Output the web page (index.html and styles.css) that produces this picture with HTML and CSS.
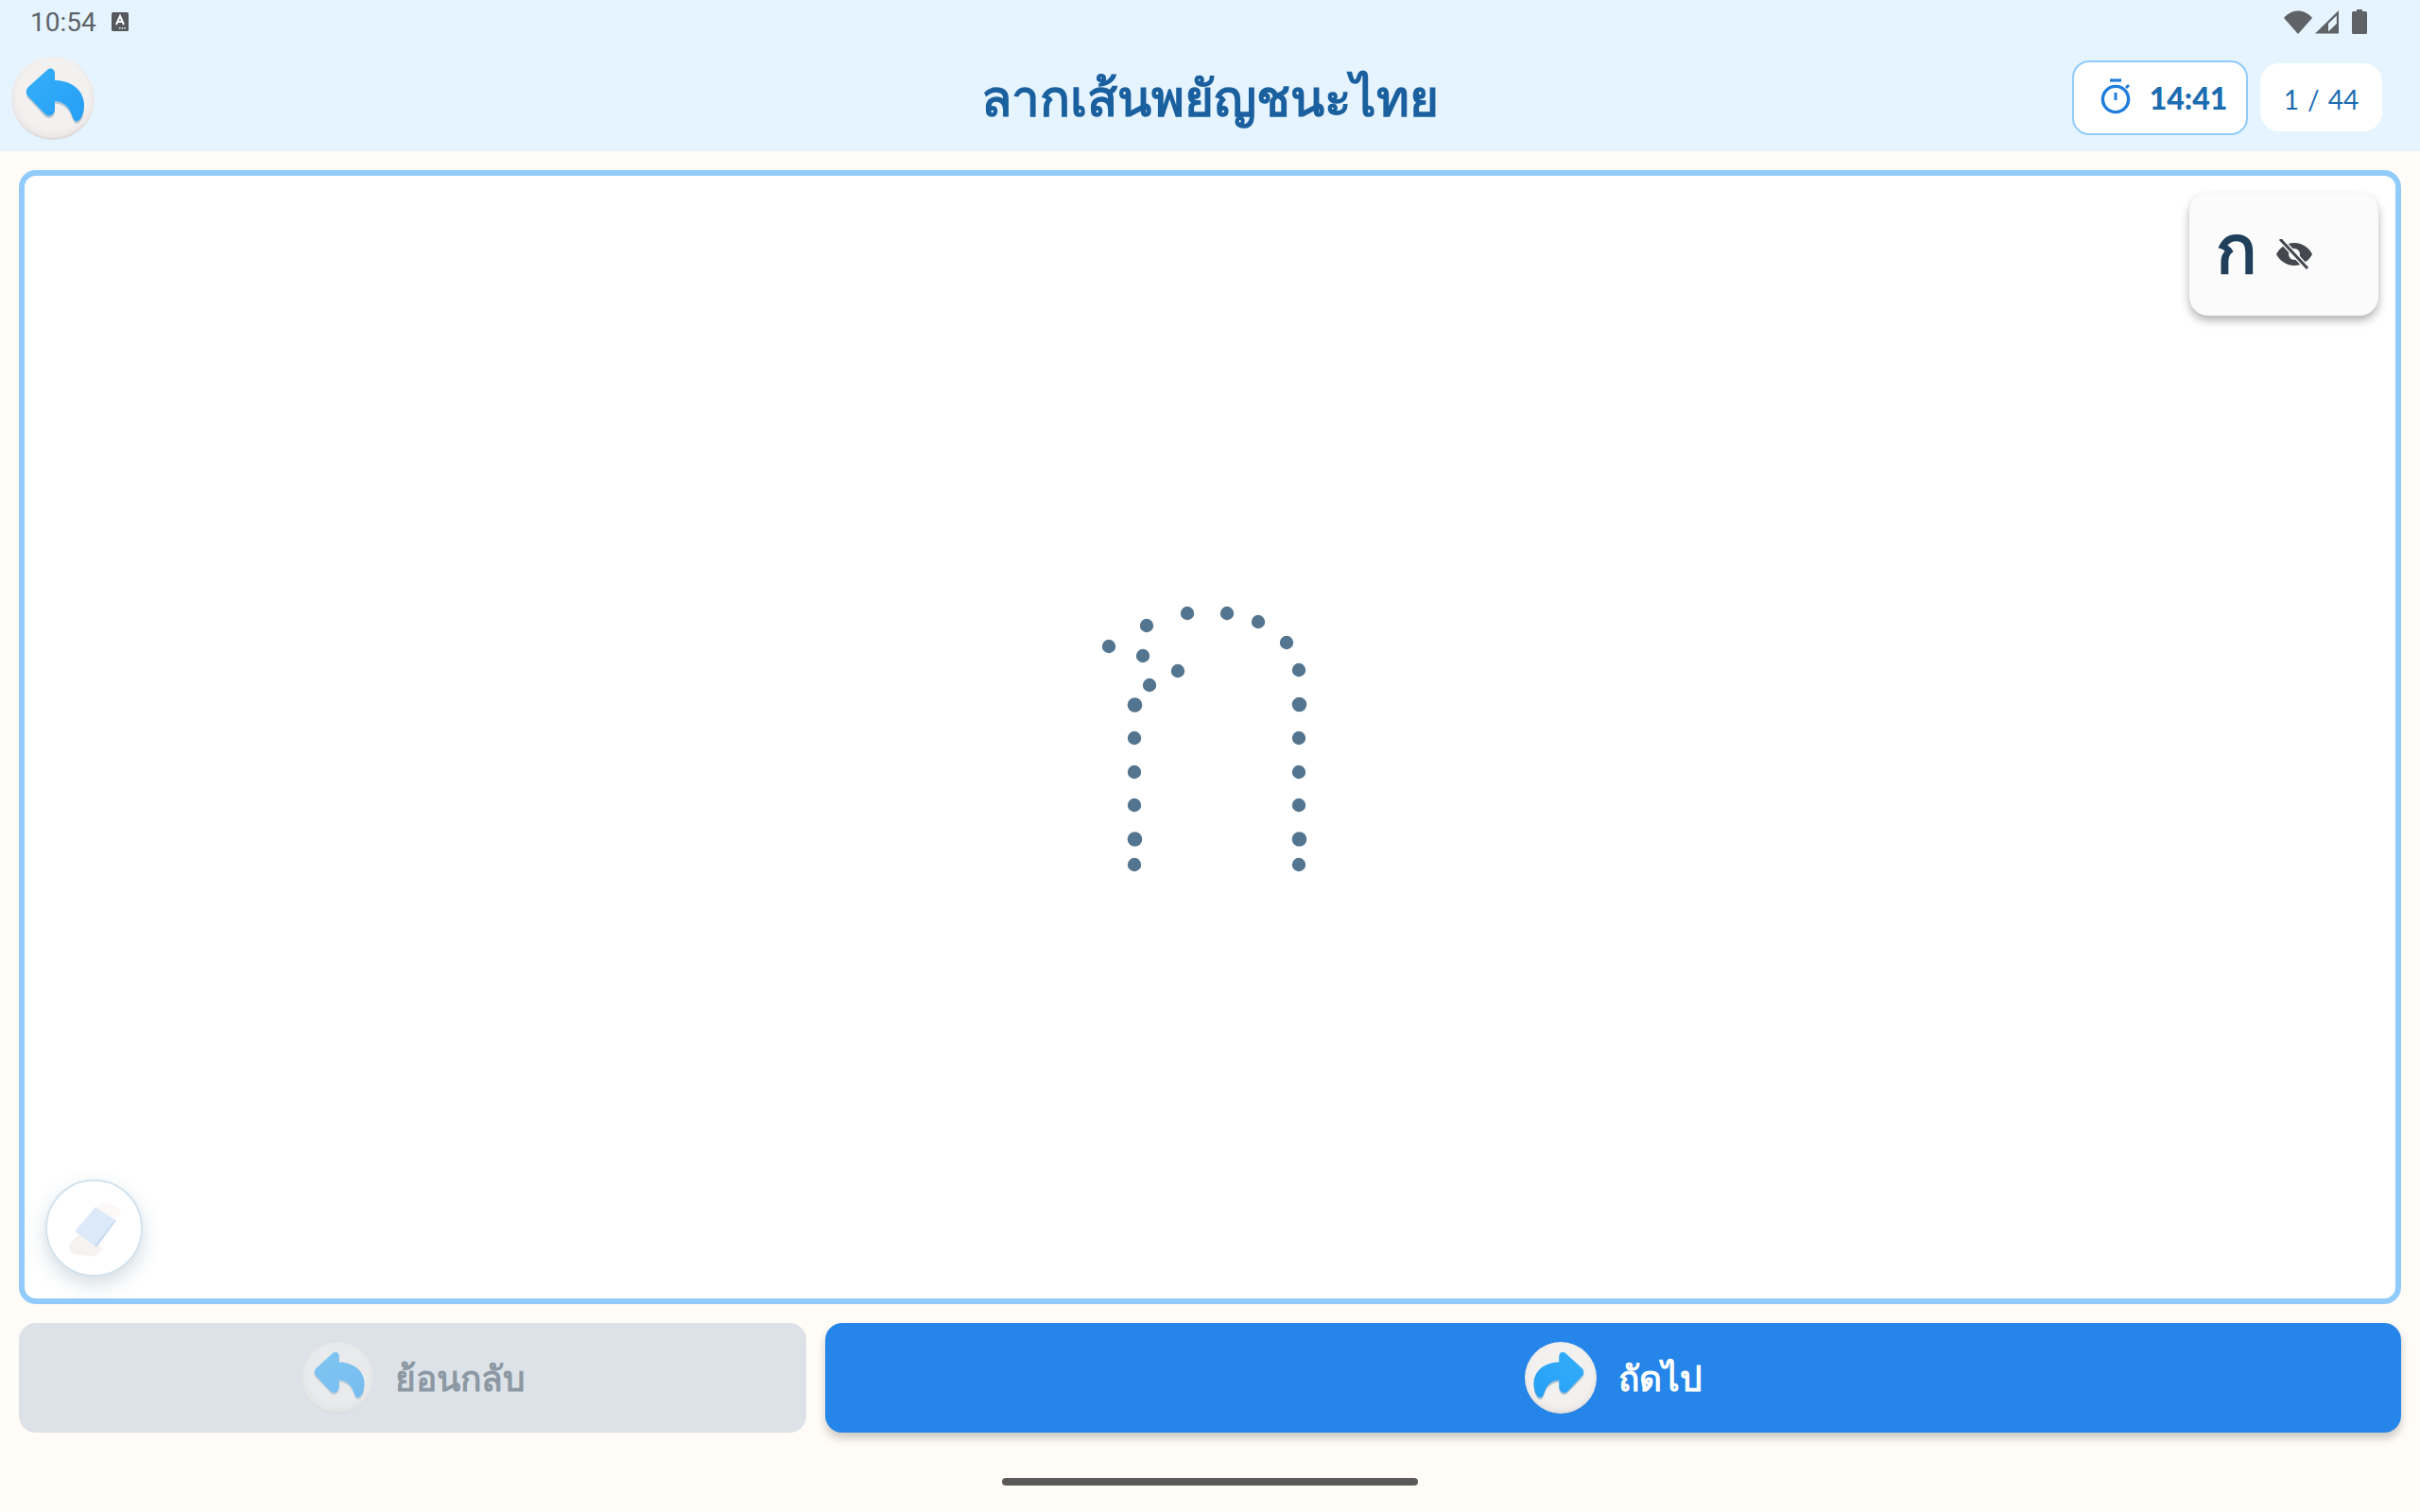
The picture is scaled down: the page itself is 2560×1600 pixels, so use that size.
FILE: index.html

```html
<!DOCTYPE html>
<html lang="th">
<head>
    <meta charset="UTF-8">
    <meta name="viewport" content="width=device-width, initial-scale=1.0">
    <title>ลากเส้นพยัญชนะไทย</title>
    <link rel="stylesheet" href="styles.css">
</head>
<body>
    <!-- Shared icon definitions -->
    <svg class="defs" width="0" height="0">
        <defs>
            <radialGradient id="discFill" cx="50%" cy="46%" r="54%">
                <stop offset="0.78" stop-color="#f3f1f0"/>
                <stop offset="0.93" stop-color="#ebe8e7"/>
                <stop offset="1" stop-color="#d6d3d2"/>
            </radialGradient>
            <linearGradient id="arrowFill" x1="0" y1="0" x2="1" y2="1">
                <stop offset="0" stop-color="#35aefa"/>
                <stop offset="1" stop-color="#259ff5"/>
            </linearGradient>
            <symbol id="arrowBack" viewBox="0 0 88 88">
                <circle cx="44" cy="44" r="44" fill="url(#discFill)"/>
                <path d="M18 42 C15 39 15 35 18 32 L38 14 C42 11 46 13 46 18 L46 25 C62 25 76 34 77 50 C77 58 75 66 70 68 C66 69 65 64 63 59 C60 52 54 47 46 47 L46 56 C45 62 40 64 36 61 Z" fill="#0b4f80" opacity="0.28" transform="translate(0 2.5)"/>
                <path d="M18 42 C15 39 15 35 18 32 L38 14 C42 11 46 13 46 18 L46 25 C62 25 76 34 77 50 C77 58 75 66 70 68 C66 69 65 64 63 59 C60 52 54 47 46 47 L46 56 C45 62 40 64 36 61 Z" fill="url(#arrowFill)"/>
            </symbol>
        </defs>
    </svg>

    <header class="top">
        <div class="status-bar">
            <div class="status-left">
                <span class="clock">10:54</span>
                <svg class="keyboard-icon" viewBox="0 0 18 20">
                    <rect width="18" height="20" rx="1.5" fill="#55595e"/>
                    <path d="M5 13 L9 4 L13 13 M6.5 10 H11.5" fill="none" stroke="#fff" stroke-width="2"/>
                    <path d="M8 16 h1.4 v1.4 h-1.4z M10.6 16 h1.4 v1.4 h-1.4z M13.2 16 h1.4 v1.4 h-1.4z" fill="#fff"/>
                </svg>
            </div>
            <div class="status-right">
                <svg class="wifi-icon" viewBox="0 0 30 25"><path d="M0 8 C8 -2 22 -2 30 8 L15 25 Z" fill="#5f6368"/></svg>
                <svg class="signal-icon" viewBox="0 0 25 25">
                    <path d="M0 24.5 L25 0 V24.5 Z" fill="#5f6368"/>
                    <path d="M14 22.5 L22.8 14 V5.5 L14 14 Z" fill="#e5f4ff"/>
                </svg>
                <svg class="battery-icon" viewBox="0 0 16 26">
                    <path d="M5 0 H11 V2 H14.5 Q16 2 16 3.5 V24.5 Q16 26 14.5 26 H1.5 Q0 26 0 24.5 V3.5 Q0 2 1.5 2 H5 Z" fill="#5f6368"/>
                </svg>
            </div>
        </div>
        <div class="app-bar">
            <div class="app-bar-left">
                <svg class="back-btn"><use href="#arrowBack"/></svg>
            </div>
            <h1 class="title">ลากเส้นพยัญชนะไทย</h1>
            <div class="app-bar-right">
                <div class="timer-chip">
                    <svg class="timer-icon" viewBox="0 0 34 38" fill="none" stroke="#1f7ddb" stroke-width="3.4">
                        <circle cx="16" cy="22" r="13.6"/>
                        <path d="M10 2 H22" stroke-width="3.2"/>
                        <path d="M16 15 V23" stroke-width="3"/>
                        <path d="M27 10 L30 7" stroke-width="3"/>
                    </svg>
                    <span>14:41</span>
                </div>
                <div class="count-chip">1 / 44</div>
            </div>
        </div>
    </header>

    <main class="content">
        <section class="board">
            <!-- viewBox uses page coordinates so the points read off the letter directly -->
            <svg class="trace" viewBox="26 186 2508 1188">
                <g fill="#54758f">
                    <circle cx="1173" cy="684" r="7.2"/>
                    <circle cx="1213" cy="662" r="7.2"/>
                    <circle cx="1209" cy="694" r="7.2"/>
                    <circle cx="1246" cy="710" r="7.2"/>
                    <circle cx="1216" cy="725" r="7.2"/>
                    <circle cx="1256" cy="649" r="7.2"/>
                    <circle cx="1298" cy="649" r="7.2"/>
                    <circle cx="1331" cy="658" r="7.2"/>
                    <circle cx="1361" cy="680" r="7.2"/>
                    <circle cx="1200.5" cy="746" r="7.8"/>
                    <circle cx="1200" cy="781" r="7.2"/>
                    <circle cx="1200" cy="817" r="7.2"/>
                    <circle cx="1200" cy="852" r="7.2"/>
                    <circle cx="1200.5" cy="888" r="7.8"/>
                    <circle cx="1200" cy="915" r="7.2"/>
                    <circle cx="1374" cy="709" r="7.2"/>
                    <circle cx="1374.5" cy="745.5" r="7.8"/>
                    <circle cx="1374" cy="781" r="7.2"/>
                    <circle cx="1374" cy="817" r="7.2"/>
                    <circle cx="1374" cy="852" r="7.2"/>
                    <circle cx="1374.5" cy="888" r="7.8"/>
                    <circle cx="1374" cy="915" r="7.2"/>
                </g>
            </svg>

            <div class="letter-card">
                <span class="letter">ก</span>
                <svg class="eye-icon" viewBox="0 0 38 32">
                    <path d="M19 4 C28 4 35 10 38 16 C35 22 28 28 19 28 C10 28 3 22 0 16 C3 10 10 4 19 4 Z" fill="#44484e"/>
                    <circle cx="19" cy="16" r="6" fill="#fbfbfb"/>
                    <path d="M4 0 L33 31" stroke="#fbfbfb" stroke-width="6"/>
                    <path d="M4 0 L33 31" stroke="#44484e" stroke-width="3"/>
                </svg>
            </div>

            <button class="eraser-btn">
                <svg class="eraser-icon" viewBox="0 0 56 58">
                    <path d="M3 44 L17 30 L37 50 L30 56 Q26 58 20 57 L6 55 Q0 50 3 44 Z" fill="#f6f2f1"/>
                    <path d="M33 5 Q36 2 42 3 L53 8 Q56 11 54 15 L47 22 L29 8 Z" fill="#fbf8f7"/>
                    <path d="M29 7 L50 21 L30 48 L8 32 Z" fill="#dbe9f8"/>
                    <path d="M49 20 L50 21 L30 48 L28 47 Z" fill="#c7dcf2"/>
                </svg>
            </button>
        </section>

        <nav class="actions">
            <button class="action action-prev">
                <svg class="action-icon"><use href="#arrowBack"/></svg>
                <span>ย้อนกลับ</span>
            </button>
            <button class="action action-next">
                <svg class="action-icon flip"><use href="#arrowBack"/></svg>
                <span>ถัดไป</span>
            </button>
        </nav>
    </main>

    <footer class="nav-bar">
        <div class="home-pill"></div>
    </footer>
</body>
</html>
```

FILE: styles.css

```css
:root {
    --sky: #e5f4ff;
    --cream: #fffcf7;
    --line: #90cbfb;
    --title: #1a5f9e;
    --primary: #2585e8;
    --muted: #dce2e8;
    --thai: "Noto Sans", "DejaVu Sans", "Liberation Sans", sans-serif;
}

* {
    box-sizing: border-box;
}

html, body {
    margin: 0;
    height: 100%;
}

body {
    width: 2560px;
    height: 1600px;
    display: flex;
    flex-direction: column;
    background: var(--cream);
    font-family: var(--thai);
    overflow: hidden;
}

.defs {
    position: absolute;
}

/* Header */
.top {
    height: 160px;
    flex: none;
    background: var(--sky);
}

.status-bar {
    height: 46px;
    display: flex;
    align-items: center;
    justify-content: space-between;
    padding: 0 56px 0 32px;
}

.status-left, .status-right {
    display: flex;
    align-items: center;
}

.clock {
    font-family: Roboto, sans-serif;
    font-size: 28px;
    color: #5f6368;
}

.keyboard-icon {
    width: 18px;
    height: 20px;
    margin-left: 16px;
}

.wifi-icon {
    width: 30px;
    height: 25px;
}

.signal-icon {
    width: 25px;
    height: 25px;
    margin-left: 3px;
}

.battery-icon {
    width: 16px;
    height: 26px;
    margin-left: 14px;
}

.app-bar {
    height: 114px;
    display: grid;
    grid-template-columns: 1fr auto 1fr;
    align-items: center;
    padding: 0 40px;
}

.back-btn {
    display: block;
    width: 88px;
    height: 88px;
    margin: 1px 0 0 -28px;
}

.title {
    margin: 0;
    padding-top: 2px;
    font-size: 53px;
    font-weight: 700;
    color: var(--title);
    white-space: nowrap;
}

.app-bar-right {
    display: flex;
    align-items: center;
    justify-content: flex-end;
    gap: 13px;
}

.timer-chip {
    width: 186px;
    height: 79px;
    display: flex;
    align-items: center;
    justify-content: center;
    gap: 18px;
    padding-left: 8px;
    background: #fff;
    border: 2px solid var(--line);
    border-radius: 18px;
    font-family: Lato, sans-serif;
    font-size: 32px;
    font-weight: 900;
    color: #1a6bb0;
}

.timer-icon {
    width: 34px;
    height: 38px;
    margin-top: -3px;
}

.count-chip {
    width: 129px;
    height: 72px;
    display: flex;
    align-items: center;
    justify-content: center;
    padding-top: 3px;
    background: #fff;
    border-radius: 20px;
    font-family: Lato, sans-serif;
    font-size: 28px;
    font-weight: 400;
    color: #1a6bb0;
    word-spacing: 2px;
}

/* Drawing area */
.content {
    flex: 1;
    display: flex;
    flex-direction: column;
    gap: 20px;
    padding: 20px 20px 0;
}

.board {
    position: relative;
    height: 1200px;
    background: #fff;
    border: 6px solid var(--line);
    border-radius: 18px;
}

.trace {
    display: block;
    width: 100%;
    height: 100%;
}

.letter-card {
    position: absolute;
    top: 18px;
    right: 18px;
    width: 200px;
    height: 130px;
    display: flex;
    align-items: center;
    padding-left: 28px;
    gap: 20px;
    background: #fbfbfb;
    border-radius: 20px;
    box-shadow: 0 5px 10px rgba(0, 0, 0, 0.3);
}

.letter {
    font-size: 72px;
    font-weight: 700;
    line-height: 1;
    color: #1f3f5b;
    margin-top: -16px;
}

.eye-icon {
    width: 38px;
    height: 32px;
}

.eraser-btn {
    position: absolute;
    left: 22px;
    bottom: 23px;
    width: 103px;
    height: 103px;
    padding: 0;
    display: flex;
    align-items: center;
    justify-content: center;
    background: #fff;
    border: 2px solid #d3e3ee;
    border-radius: 50%;
    box-shadow: 0 8px 20px rgba(60, 100, 130, 0.22);
}

.eraser-icon {
    width: 58px;
    height: 60px;
}

/* Bottom buttons */
.actions {
    height: 116px;
    display: grid;
    grid-template-columns: 1fr 2fr;
    gap: 20px;
}

.action {
    display: flex;
    align-items: center;
    justify-content: center;
    gap: 23px;
    padding-top: 1px;
    border: none;
    border-radius: 18px;
    font-family: var(--thai);
    font-size: 37px;
    font-weight: 700;
}

.action-prev {
    background: var(--muted);
    color: #8c98a3;
}

.action-prev .action-icon {
    opacity: 0.55;
}

.action-next {
    background: var(--primary);
    color: #fff;
    box-shadow: 0 6px 10px rgba(0, 0, 0, 0.2);
}

.action-icon {
    width: 76px;
    height: 76px;
}

.flip {
    transform: scaleX(-1);
}

/* Android nav bar */
.nav-bar {
    height: 84px;
    flex: none;
    display: flex;
    justify-content: center;
    padding-top: 48px;
}

.home-pill {
    width: 440px;
    height: 8px;
    background: #5a5a5a;
    border-radius: 4px;
}
```
